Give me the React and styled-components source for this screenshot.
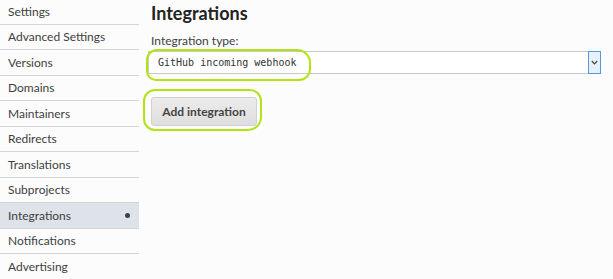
import React from "react";
import styled, { createGlobalStyle } from "styled-components";

const Global = createGlobalStyle`
  html, body { margin: 0; padding: 0; background: #fcfcfc; }
  body { font-family: "Lato", "Open Sans", sans-serif; color: #404040; }
`;

const Page = styled.div`
  display: flex;
  width: 613px;
  height: 279px;
  overflow: hidden;
  background: #fcfcfc;
`;

const Sidebar = styled.ul`
  list-style: none;
  margin: -1px 0 0 0;
  padding: 0;
  width: 139px;
  flex: none;
`;

const NavItem = styled.li`
  display: flex;
  align-items: center;
  justify-content: space-between;
  height: 24.5px;
  padding: 0 8px 0 8px;
  border-bottom: 1px solid #d4d4d4;
  font-size: 12px;
  color: #404040;
  background: ${(p) => (p.$active ? "#dde3e8" : "transparent")};
`;

const Dot = styled.span`
  width: 5px;
  height: 5px;
  border-radius: 50%;
  background: #404040;
  margin-right: 1px;
`;

const Main = styled.div`
  position: relative;
  flex: 1;
  padding: 0 12px 0 9px;
`;

const Heading = styled.h2`
  margin: 1px 0 0 3px;
  font-size: 18px;
  font-weight: 700;
  color: #222;
  line-height: 24px;
`;

const Label = styled.div`
  margin: 8px 0 0 3px;
  font-size: 12px;
  line-height: 15px;
  color: #404040;
`;

const SelectBox = styled.div`
  margin-top: 3px;
  display: flex;
  align-items: stretch;
  height: 23px;
  background: #fff;
  border: 1px solid #c8c8c8;
  box-sizing: border-box;
`;

const SelectText = styled.div`
  flex: 1;
  display: flex;
  align-items: center;
  padding-left: 9px;
  font-family: "DejaVu Sans Mono", monospace;
  font-size: 10px;
  color: #333;
`;

const Arrow = styled.div`
  width: 11px;
  margin: -1px -1px -1px 0;
  border: 1px solid #4d9be6;
  background: #e8f1fb;
  display: flex;
  align-items: center;
  justify-content: center;
`;

const Button = styled.button`
  margin: 23px 0 0 3px;
  width: 106px;
  height: 29px;
  border: 1px solid #d0d0d0;
  border-radius: 3px;
  background: linear-gradient(#ececec, #dedede);
  font-family: "Lato", "Open Sans", sans-serif;
  font-size: 12px;
  font-weight: 700;
  color: #444;
  padding: 0;
`;

const Ring = styled.div`
  position: absolute;
  border: 2px solid #b2e314;
  border-radius: ${(p) => p.$r};
  pointer-events: none;
`;

const items = [
  "Settings",
  "Advanced Settings",
  "Versions",
  "Domains",
  "Maintainers",
  "Redirects",
  "Translations",
  "Subprojects",
  "Integrations",
  "Notifications",
  "Advertising",
];

export default function App() {
  return (
    <Page>
      <Global />
      <Sidebar>
        {items.map((t) => (
          <NavItem key={t} $active={t === "Integrations"}>
            <span>{t}</span>
            {t === "Integrations" && <Dot />}
          </NavItem>
        ))}
      </Sidebar>
      <Main>
        <Heading>Integrations</Heading>
        <Label>Integration type:</Label>
        <SelectBox>
          <SelectText>GitHub incoming webhook</SelectText>
          <Arrow>
            <svg width="7" height="5" viewBox="0 0 7 5">
              <path d="M0.8 1 L3.5 3.8 L6.2 1" fill="none" stroke="#444" strokeWidth="1.2" />
            </svg>
          </Arrow>
        </SelectBox>
        <Button>Add integration</Button>
        <Ring style={{ left: 7, top: 49, width: 161, height: 28 }} $r="11px 14px 12px 10px" />
        <Ring style={{ left: 4, top: 89, width: 115, height: 38 }} $r="12px 12px 14px 12px" />
      </Main>
    </Page>
  );
}
